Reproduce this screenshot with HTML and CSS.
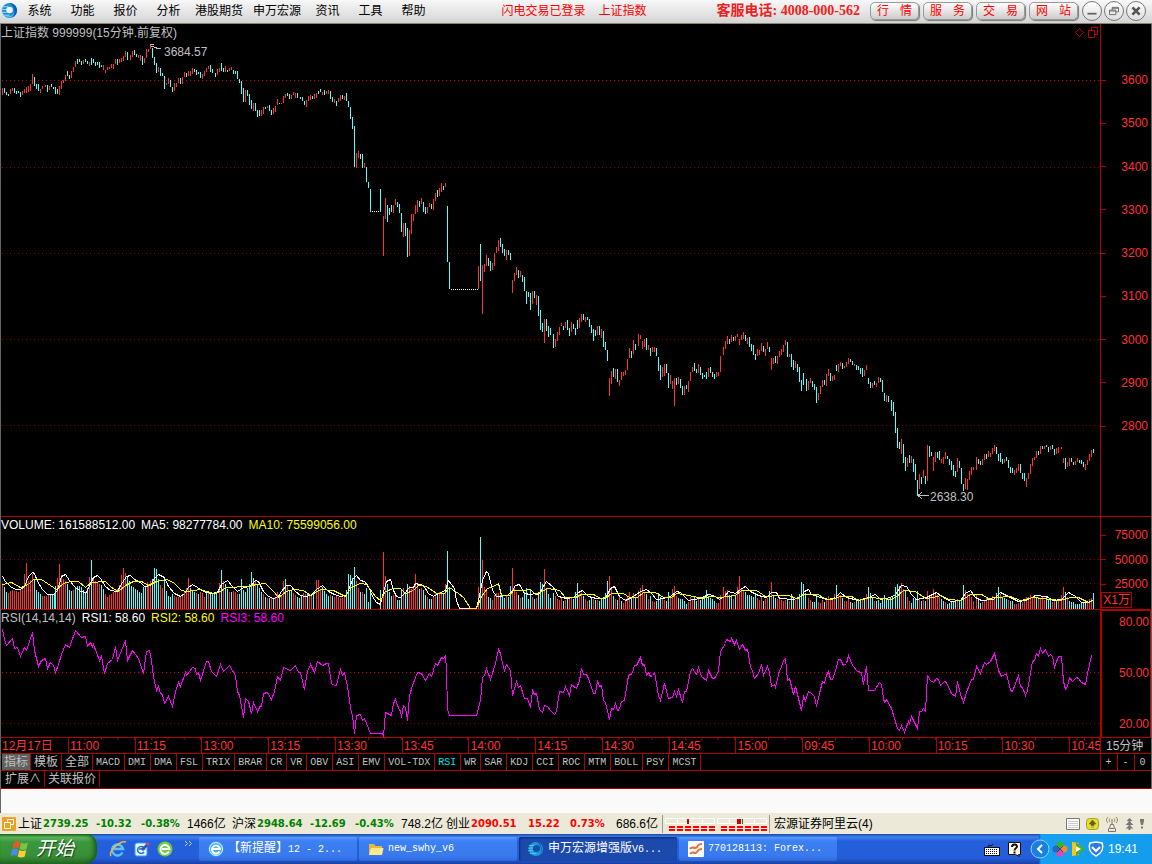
FILE: index.html
```html
<!DOCTYPE html>
<html lang="zh-CN">
<head>
    <meta charset="UTF-8">
    <meta name="viewport" content="width=device-width, initial-scale=1.0">
    <title>申万宏源增强版V6</title>
    <link rel="stylesheet" href="styles.css">
</head>
<body>
    <!-- Menu bar -->
    <header class="menu-bar">
        <svg class="app-logo" viewBox="0 0 18 18" aria-hidden="true">
            <circle cx="9" cy="9" r="8" fill="#1d8ede"/>
            <path d="M1 5h7M0 8h6M0 11h6M2 14h7" stroke="#a8dcf8" stroke-width="1"/>
            <path d="M9 1a8 8 0 0 1 3 15.400c4-4 3-12-3-15.400z" fill="#0a5cb0"/>
            <circle cx="9" cy="8.500" r="3.500" fill="#e8f6ff"/>
            <path d="M4 14c4 2 8 1 10-3-1 5-6 7-10 3z" fill="#57c8f4"/>
        </svg>
        <nav class="menu">
            <a href="#">系统</a>
            <a href="#">功能</a>
            <a href="#">报价</a>
            <a href="#">分析</a>
            <a href="#">港股期货</a>
            <a href="#">申万宏源</a>
            <a href="#">资讯</a>
            <a href="#">工具</a>
            <a href="#">帮助</a>
        </nav>
        <div class="login-info"><span>闪电交易已登录</span><span>上证指数</span></div>
        <div class="hotline">客服电话: 4008-000-562</div>
        <div class="quick-buttons">
            <button type="button"><span>行</span><span>情</span></button>
            <button type="button"><span>服</span><span>务</span></button>
            <button type="button"><span>交</span><span>易</span></button>
            <button type="button"><span>网</span><span>站</span></button>
        </div>
        <div class="window-buttons">
            <button type="button" aria-label="最小化"><svg viewBox="0 0 20 20"><path d="M5 13h10" stroke="#666" stroke-width="2"/></svg></button>
            <button type="button" aria-label="还原"><svg viewBox="0 0 20 20"><path d="M8 9V6h7v5h-3M5 9h7v5H5zM5 10h7M8 7h7" fill="none" stroke="#666"/></svg></button>
            <button type="button" aria-label="关闭"><svg viewBox="0 0 20 20"><path d="M6 6l8 8M14 6l-8 8" stroke="#555" stroke-width="3"/></svg></button>
        </div>
    </header>

    <!-- Charts -->
    <main class="charts">
        <section class="panel panel-price">
            <div class="plot">
                <svg id="priceChart" viewBox="1 24 1099 492" preserveAspectRatio="none">
                    <path class="grid-main" d="M2 80.500H1101"/>
                    <path class="grid" d="M2 167.500H1101M2 253.500H1101M2 339.500H1101M2 425.500H1101"/>
                    <path class="arrow" d="M161 48.500h-3l-7-2.500M150 49v-5h4M929 495.500H918M922 492.500l-4 3 4 3"/>
                    <path class="marker" d="M1079.500 28.500l4 4-4 4-4-4zM1088.500 30.500h6v7h-6zM1091.500 30v-2.500h6v7h-3"/>
                </svg>
                <h1 class="plot-title">上证指数 999999(15分钟.前复权)</h1>
                <span class="note note-high">3684.57</span>
                <span class="note note-low">2638.30</span>
            </div>
            <ul class="scale">
                <li>3600</li><li>3500</li><li>3400</li><li>3300</li><li>3200</li><li>3100</li><li>3000</li><li>2900</li><li>2800</li>
            </ul>
        </section>

        <section class="panel panel-volume">
            <div class="plot">
                <svg id="volumeChart" viewBox="1 517 1099 92" preserveAspectRatio="none">
                    <path class="grid" d="M2 559.500H1101M2 583.500H1101"/>
                </svg>
                <p class="plot-title"><span class="white">VOLUME: 161588512.00</span><span class="white">MA5: 98277784.00</span><span class="yellow">MA10: 75599056.00</span></p>
            </div>
            <ul class="scale">
                <li>75000</li><li>50000</li><li>25000</li>
            </ul>
            <span class="unit">X1万</span>
        </section>

        <section class="panel panel-rsi">
            <div class="plot">
                <svg id="rsiChart" viewBox="1 610 1099 127" preserveAspectRatio="none">
                    <path class="grid-main" d="M2 672.500H1101"/>
                    <path class="grid" d="M2 723.500H1101"/>
                </svg>
                <p class="plot-title"><span>RSI(14,14,14)</span><span class="white">RSI1: 58.60</span><span class="yellow">RSI2: 58.60</span><span class="magenta">RSI3: 58.60</span></p>
            </div>
            <ul class="scale">
                <li>80.00</li><li>50.00</li><li>20.00</li>
            </ul>
        </section>
    </main>

    <!-- Time axis -->
    <div class="time-axis">
        <div class="times">
            <span>12月17日</span><span>11:00</span><span>11:15</span><span>13:00</span><span>13:15</span><span>13:30</span><span>13:45</span><span>14:00</span><span>14:15</span><span>14:30</span><span>14:45</span><span>15:00</span><span>09:45</span><span>10:00</span><span>10:15</span><span>10:30</span><span>10:45</span>
        </div>
        <div class="period">15分钟</div>
    </div>

    <!-- Indicator tabs -->
    <div class="tabs">
        <button type="button" class="cn selected">指标</button>
        <button type="button" class="cn">模板</button>
        <button type="button" class="cn">全部</button>
        <button type="button">MACD</button>
        <button type="button">DMI</button>
        <button type="button">DMA</button>
        <button type="button">FSL</button>
        <button type="button">TRIX</button>
        <button type="button">BRAR</button>
        <button type="button">CR</button>
        <button type="button">VR</button>
        <button type="button">OBV</button>
        <button type="button">ASI</button>
        <button type="button">EMV</button>
        <button type="button">VOL-TDX</button>
        <button type="button" class="current">RSI</button>
        <button type="button">WR</button>
        <button type="button">SAR</button>
        <button type="button">KDJ</button>
        <button type="button">CCI</button>
        <button type="button">ROC</button>
        <button type="button">MTM</button>
        <button type="button">BOLL</button>
        <button type="button">PSY</button>
        <button type="button">MCST</button>
        <div class="zoom-buttons">
            <button type="button">+</button>
            <button type="button">-</button>
            <button type="button">0</button>
        </div>
    </div>
    <div class="tabs tabs-extra">
        <button type="button" class="cn">扩展∧</button>
        <button type="button" class="cn">关联报价</button>
    </div>
    <div class="message-area"></div>

    <!-- Status bar -->
    <footer class="status-bar">
        <svg class="status-logo" viewBox="0 0 14 14" aria-hidden="true">
            <rect width="14" height="14" rx="1" fill="#f0a020"/>
            <path d="M5.500 5V2.500h6v5H9M2.500 5.500h6v6h-6z" fill="none" stroke="#fff"/>
        </svg>
        <div class="quote down"><span>上证</span><b>2739.25</b><b>-10.32</b><b>-0.38%</b><span>1466亿</span></div>
        <div class="quote down"><span>沪深</span><b>2948.64</b><b>-12.69</b><b>-0.43%</b><span>748.2亿</span></div>
        <div class="quote up"><span>创业</span><b>2090.51</b><b>15.22</b><b>0.73%</b><span>686.6亿</span></div>
        <div class="meters">
            <svg viewBox="0 0 50 14" aria-hidden="true">
                <path d="M.5 1.500h49v5H.5zM12.500 1v6M37.500 1v6" fill="none" stroke="#fff"/>
                <path d="M23 2v5" stroke="#c00" stroke-width="2"/>
                <path d="M4 10h46M4 13h46" stroke="#f00" stroke-width="2" stroke-dasharray="6 2"/>
            </svg>
            <svg viewBox="0 0 50 14" aria-hidden="true">
                <path d="M.5 1.500h49v5H.5zM12.500 1v6M37.500 1v6" fill="none" stroke="#fff"/>
                <path d="M22 2v5" stroke="#c00" stroke-width="4"/><path d="M25.500 2v5" stroke="#080"/>
                <path d="M4 10h46M4 13h46" stroke="#f00" stroke-width="2" stroke-dasharray="6 2"/>
            </svg>
        </div>
        <span class="server">宏源证券阿里云(4)</span>
        <div class="status-icons">
            <svg width="14" height="14" viewBox="0 0 14 14"><path d="M.5 1.500h13v11H.5z" fill="#fff" stroke="#777"/><path d="M2 4.500h10M2 6.500h10M2 8.500h10M2 10.500h10" stroke="#ccc"/></svg>
            <svg width="13" height="14" viewBox="0 0 13 14"><rect x=".5" y="1.500" width="12" height="11" rx="3" fill="#e4dc38" stroke="#aaa020"/><path d="M6.500 3l3.500 4H8v1.500H5V7H3zM5 10h3" fill="#666000" stroke="#666000" stroke-width=".5"/></svg>
            <svg width="14" height="16" viewBox="0 0 14 16"><path d="M3 1C1 3 1 5 3 7M11 1c2 2 2 4 0 6M5 2.500C4 4 4 5 5 6M9 2.500c1 1.500 1 2.500 0 3.500" fill="none" stroke="#8a8850"/><path d="M7 3v5M5.500 8.500h3l1 4h1v3h-7v-3h1zM5 12.500h4" fill="none" stroke="#777"/></svg>
            <svg width="9" height="14" viewBox="0 0 9 14"><path d="M4.500 1l3 3h-2v1l3 3h-3v1l3 2.500h-3V13h-2v-1.500h-3L3.500 9V8h-3l3-3V4h-2z" fill="#777"/></svg>
            <svg width="4" height="12" viewBox="0 0 4 12"><path d="M0 1h4v2L3 7H1L0 3zM1 8.500h2v2H1z" fill="#777"/></svg>
        </div>
    </footer>

    <!-- Taskbar -->
    <div class="taskbar">
        <button type="button" class="start">
            <svg width="20" height="20" viewBox="0 0 20 20" aria-hidden="true">
                <path d="M4 3c2-1.500 4-1.500 6 0L8.500 9.500c-2-1.300-4-1.300-6 0z" fill="#f0552a"/>
                <path d="M11 3.500c2 1.300 4 1.300 7 0L16.500 10c-2.500 1.300-5 1.300-7 0z" fill="#7cc440"/>
                <path d="M2.200 10.500c2-1.300 4-1.300 6 0L6.700 17c-2-1.300-4-1.300-6 0z" fill="#4a8af0"/>
                <path d="M9.200 11c2 1.300 4.500 1.300 7 0l-1.500 6.500c-2.500 1.300-5 1.300-7 0z" fill="#ffcc33"/>
            </svg>
            <span>开始</span>
        </button>
        <div class="quick-launch">
            <svg width="18" height="18" viewBox="0 0 18 18"><path d="M13.500 12.500A5.500 5.500 0 1 1 14 9H5" fill="none" stroke="#5cc0ff" stroke-width="2.500"/><path d="M2 16C-1 12 11 0 17 2" fill="none" stroke="#f4b83a" stroke-width="1.500"/></svg>
            <svg width="16" height="16" viewBox="0 0 16 16"><rect x="1" y="2" width="12" height="13" rx="2" fill="#e8f4ff" stroke="#3aa0e8"/><path d="M10 11a3.500 3.500 0 1 1 .5-3H5" fill="none" stroke="#2272d0" stroke-width="1.500"/><path d="M7 8l6-6 2 2-6 6z" fill="#2858b0"/><path d="M13 2l2 2" stroke="#f44" stroke-width="2"/></svg>
            <svg width="16" height="16" viewBox="0 0 16 16"><circle cx="8" cy="8" r="7.500" fill="#6fce3c"/><path d="M12 10.500A4.500 4.500 0 1 1 12.500 8H5" fill="none" stroke="#fff" stroke-width="2"/></svg>
            <svg class="more" width="9" height="7" viewBox="0 0 9 7"><path d="M1 1l2.500 2.500L1 6M5 1l2.500 2.500L5 6" fill="none" stroke="#b8d4ff"/></svg>
        </div>
        <div class="tasks">
            <button type="button">
                <svg width="16" height="16" viewBox="0 0 16 16"><circle cx="8" cy="8" r="7.500" fill="#4ab2ee"/><circle cx="8" cy="8" r="6.500" fill="none" stroke="#d8f2ff"/><path d="M11.500 10.500A4 4 0 1 1 12 8H5" fill="none" stroke="#fff" stroke-width="2"/></svg>
                <span><span class="cn">【新提醒】</span>12 - 2...</span>
            </button>
            <button type="button">
                <svg width="16" height="16" viewBox="0 0 16 16"><path d="M1 3h5l1.500 2H14v9H1z" fill="#e8b83c"/><path d="M3 7h12.500L14 14H1z" fill="#ffe98c"/></svg>
                <span>new_swhy_v6</span>
            </button>
            <button type="button" class="active">
                <svg width="16" height="16" viewBox="0 0 18 18"><circle cx="9" cy="9" r="8" fill="#1d9ee0"/><path d="M1 5h7M0 8h6M0 11h6M2 14h7" stroke="#5ad0e8"/><circle cx="9.500" cy="8.500" r="4" fill="#1b49ac"/><path d="M9 1a8 8 0 0 1 4 14c3-5 2-10-4-14z" fill="#0c62c0"/></svg>
                <span><span class="cn">申万宏源增强版</span>V6...</span>
            </button>
            <button type="button">
                <svg width="16" height="16" viewBox="0 0 16 16"><rect width="16" height="16" rx="1" fill="#fff"/><path d="M2 8c3-4 5 1 7-2s3-3 5-3M2 13c3-4 5 1 7-2s3-3 5-3" fill="none" stroke="#ee6a30" stroke-width="2"/></svg>
                <span>770128113: Forex...</span>
            </button>
        </div>
        <div class="language">
            <svg width="16" height="14" viewBox="0 0 16 14"><path d="M4 5l1-2 2 1 2-2" fill="none" stroke="#111"/><rect x=".5" y="5.500" width="15" height="8" fill="#fff" stroke="#111"/><path d="M2 7.500h12M2 9.500h12M2 11.500h12" stroke="#111" stroke-dasharray="1 1"/></svg>
            <svg width="14" height="15" viewBox="0 0 14 15"><path d="M.5.500h12v12h-2l1 2-4-2h-7z" fill="#fff8e0" stroke="#111"/><path d="M4 5c0-3.500 5-3 5-.5 0 2-2.500 1.500-2.500 4M6.500 9.500v2" fill="none" stroke="#111" stroke-width="2"/></svg>
        </div>
        <div class="tray">
            <svg class="tray-arrow" width="20" height="20" viewBox="0 0 20 20"><circle cx="10" cy="10" r="9" fill="#1a80e0" stroke="#8fd0ff"/><path d="M12 6l-4 4 4 4" fill="none" stroke="#fff" stroke-width="2"/></svg>
            <svg width="16" height="16" viewBox="0 0 16 16"><circle cx="8" cy="4" r="3.500" fill="#38b818"/><circle cx="12" cy="8" r="3.500" fill="#f08c28"/><circle cx="8" cy="12" r="3.500" fill="#ee44aa"/><circle cx="4" cy="8" r="3.500" fill="#2a66c8"/><path d="M5 5l6 6M11 5l-6 6" stroke="#145a80"/></svg>
            <svg width="16" height="16" viewBox="0 0 16 16"><path d="M2 1l7 1v12l-7 1z" fill="#ffc21a"/><path d="M6 1l9 7-9 7z" fill="#48b030"/><path d="M6 5l5 3-5 3z" fill="#fff"/></svg>
            <svg width="16" height="16" viewBox="0 0 16 16"><path d="M8 1l6 1c2 6-1 11-6 13C3 13 0 8 2 2z" fill="#2a78e8" stroke="#fff" stroke-width="1.500"/><path d="M4 6l4 4 4-4" fill="none" stroke="#fff" stroke-width="2"/></svg>
            <time>19:41</time>
        </div>
    </div>

    <script src="chart.js"></script>
</body>
</html>
```
FILE: styles.css
```css
* {
    box-sizing: border-box;
    margin: 0;
    padding: 0;
}
body {
    display: flex;
    flex-direction: column;
    min-height: 100vh;
    background: #000;
    color: #c0c0c0;
    font-family: "Liberation Sans", "Noto Sans CJK SC", sans-serif;
    font-size: 12px;
    line-height: 14px;
    overflow-x: hidden;
}
button {
    border: 0;
    background: none;
    font: inherit;
    color: inherit;
    white-space: nowrap;
}
svg {
    display: block;
    flex-shrink: 0;
}
ul {
    list-style: none;
}

/* Menu bar */
.menu-bar {
    display: flex;
    align-items: center;
    height: 24px;
    padding: 0 6px 2px 1px;
    background: linear-gradient(#f8f8f8, #d4d4d4);
    border-bottom: 1px solid #8c8474;
    color: #000;
    white-space: nowrap;
}
.app-logo {
    width: 17px;
    height: 17px;
}
.menu {
    display: flex;
}
.menu a {
    min-width: 43px;
    padding: 0 5px;
    color: #000;
    text-align: center;
    text-decoration: none;
}
.login-info {
    display: flex;
    gap: 13px;
    margin-left: auto;
    color: #f00;
}
.hotline {
    margin-left: 70px;
    color: #f02020;
    font-family: "Liberation Serif", "Noto Sans CJK SC", serif;
    font-size: 14px;
    font-weight: bold;
}
.quick-buttons {
    display: flex;
    gap: 4px;
    margin-left: 10px;
}
.quick-buttons button {
    display: flex;
    align-items: center;
    justify-content: space-between;
    width: 49px;
    height: 18px;
    padding: 0 6px;
    border: 1px solid #999;
    border-radius: 5px;
    background: linear-gradient(#fff, #ccc);
    box-shadow: 1px 1px 1px #777;
    color: #f00;
}
.window-buttons {
    display: flex;
    gap: 2px;
    margin-left: 4px;
}
.window-buttons button {
    width: 20px;
    height: 20px;
    border: 1px solid #777;
    border-radius: 50%;
    background: linear-gradient(#fff, #ddd);
}

/* Charts */
.charts {
    display: flex;
    flex: 1;
    flex-direction: column;
    border-left: 1px solid #666;
    border-right: 1px solid #666;
}
.panel {
    position: relative;
    display: grid;
    grid-template-columns: minmax(0, 1fr) 51px;
    border-bottom: 1px solid #b00000;
}
.panel-price {
    flex: 492 1 0;
}
.panel-volume {
    flex: 92 1 0;
}
.panel-rsi {
    flex: 127 1 0;
}
.plot {
    position: relative;
    min-height: 0;
}
.plot svg {
    position: absolute;
    width: 100%;
    height: 100%;
    shape-rendering: crispEdges;
}
.plot-title {
    position: relative;
    display: flex;
    gap: 6px;
    padding-top: 1px;
    font-size: 12px;
    font-weight: normal;
    white-space: nowrap;
}
.note {
    position: absolute;
}
.note-high {
    left: 163px;
    top: 21px;
}
.note-low {
    left: 929px;
    bottom: 12px;
}
.white {
    color: #fff;
}
.yellow {
    color: #ff0;
}
.magenta {
    color: #f0f;
}
.panel-price .plot-title {
    padding-top: 2px;
}
.scale {
    display: flex;
    flex-direction: column;
    justify-content: space-between;
    padding-right: 3px;
    border-left: 1px solid #b00000;
    color: #ff3232;
}
.scale li {
    display: flex;
    align-items: center;
    justify-content: space-between;
}
.scale li::before {
    width: 5px;
    height: 1px;
    background: #b00000;
    content: "";
}
.panel-price .scale {
    padding-top: 49px;
    padding-bottom: 83px;
}
.panel-volume .scale {
    padding-top: 11px;
    padding-bottom: 18px;
}
.panel-rsi .scale {
    padding: 4px 1px 6px 0;
    border: 1px solid #b00000;
    border-left-width: 2px;
    border-bottom: 0;
}
.panel-rsi .scale li::before {
    width: 0;
}
.unit {
    position: absolute;
    right: 19px;
    bottom: 1px;
    padding: 0 1px;
    border: 1px solid #b00000;
    color: #ff3232;
}

/* Lines inside the charts */
.grid,
.grid-main {
    fill: none;
    stroke: #900000;
    stroke-dasharray: 1 3;
}
.grid-main {
    stroke: #c80000;
}
.rise,
.fall,
.flat,
.line,
.arrow,
.marker {
    fill: none;
    stroke: #ff3232;
}
.fall {
    stroke: #54ffff;
}
.flat {
    stroke: #fff;
    stroke-dasharray: 1 1;
}
.arrow {
    stroke: #c0c0c0;
}
.marker {
    stroke: #b00000;
}
.line-ma5 {
    stroke: #fff;
}
.line-ma10 {
    stroke: #ff0;
}
.line-rsi {
    stroke: #f0f;
}

/* Time axis */
.time-axis {
    display: grid;
    grid-template-columns: minmax(0, 1fr) 51px;
    height: 16px;
    border: 1px solid #666;
    border-width: 0 1px;
    box-shadow: inset 0 -1px #b00000;
    line-height: 16px;
}
.times {
    display: grid;
    grid-template-columns: 67px repeat(15, minmax(0, 13fr)) minmax(0, 6fr);
    color: #ff3232;
}
.times span {
    overflow: hidden;
    padding-left: 1px;
    border-left: 1px solid #b00000;
    background: linear-gradient(90deg, #b00000 1px, transparent 1px) -1px 0 / 25% 2px repeat-x;
    white-space: nowrap;
}
.times span:first-child {
    border-left: 0;
    background: none;
}
.period {
    padding-left: 5px;
    border-left: 1px solid #b00000;
}

/* Indicator tabs */
.tabs {
    display: flex;
    height: 17px;
    padding-left: 1px;
    border: 1px solid #666;
    border-width: 0 1px;
    box-shadow: inset 0 -1px #b00000;
}
.tabs button {
    height: 16px;
    padding: 0 4px 0 3px;
    border-right: 1px solid #b00000;
    font-family: "Liberation Mono", monospace;
    font-size: 10px;
    line-height: 17px;
}
.tabs .cn {
    padding: 0 3px;
    font-family: "Liberation Sans", "Noto Sans CJK SC", sans-serif;
    font-size: 12px;
    line-height: 16px;
}
.tabs .selected {
    padding: 0 2px;
    background: #606060;
}
.tabs .current {
    color: #00e0e0;
}
.zoom-buttons {
    display: flex;
    width: 51px;
    margin-left: auto;
    border-left: 1px solid #b00000;
}
.zoom-buttons button {
    flex: 1;
}
.zoom-buttons button:last-child {
    border-right: 0;
}
.tabs-extra {
    height: 18px;
}
.message-area {
    height: 24px;
    background: #fafafa;
    border-left: 1px solid #666;
}

/* Status bar */
.status-bar {
    display: flex;
    align-items: center;
    height: 21px;
    padding: 0 8px 0 2px;
    background: #ece9d8;
    color: #000;
    white-space: nowrap;
}
.status-logo {
    width: 14px;
    height: 14px;
    margin-right: 2px;
}
.quote {
    display: grid;
    grid-template-columns: 25px 53px 45px 46px 45px;
    align-items: center;
}
.quote b {
    font-family: "DejaVu Sans", sans-serif;
    font-size: 10px;
}
.down b {
    color: #008000;
}
.up b {
    color: #f00;
}
.up {
    grid-template-columns: 25px 57px 42px 46px 46px;
}
.meters {
    display: flex;
    gap: 2px;
    padding: 2px;
    border: 1px solid #999;
    border-width: 0 1px;
}
.meters svg {
    width: 50px;
    height: 14px;
}
.server {
    padding-left: 4px;
}
.status-icons {
    display: flex;
    gap: 6px;
    align-items: center;
    margin-left: auto;
}

/* Taskbar */
.taskbar {
    display: flex;
    align-items: stretch;
    height: 30px;
    background: linear-gradient(#1c48a8, #3c82f0 3px, #2560dc 7px, #245edb 24px, #1941a5);
    color: #fff;
    white-space: nowrap;
}
.start {
    display: flex;
    align-items: center;
    gap: 6px;
    width: 97px;
    padding-left: 10px;
    border-radius: 0 10px 12px 0;
    background: linear-gradient(#226c22, #5cb85c 3px, #3c983c 8px, #388e38 22px, #256c25);
    box-shadow: inset -3px 0 4px #1c5c1c;
    font-size: 19px;
    font-style: italic;
    text-shadow: 1px 1px 1px #143c14;
}
.quick-launch {
    display: flex;
    gap: 7px;
    align-items: center;
    padding-left: 12px;
}
.quick-launch .more {
    align-self: flex-start;
    margin: 6px 0 0 4px;
}
.tasks {
    display: flex;
    flex: 1;
    gap: 2px;
    padding: 3px 0 3px 6px;
    min-width: 0;
}
.tasks button {
    display: flex;
    align-items: center;
    gap: 4px;
    flex: 0 1 158px;
    min-width: 0;
    overflow: hidden;
    padding-left: 9px;
    border-radius: 2px;
    background: linear-gradient(#5c9cff, #3c80f4 4px, #3878ec 20px, #2c66d8);
    font-family: "Liberation Mono", "Noto Sans CJK SC", monospace;
    font-size: 10px;
}
.tasks .cn {
    font-size: 12px;
}
.tasks .active {
    background: #1b49ac;
    box-shadow: inset 1px 1px 2px #0c2c74;
}
.language {
    display: flex;
    gap: 8px;
    align-items: center;
    padding-right: 8px;
}
.tray {
    display: flex;
    gap: 2px;
    align-items: center;
    width: 122px;
    padding-right: 14px;
    background: linear-gradient(90deg, transparent 9px, #095bc9 9px, #18a0f0 11px, #139cec);
}
.tray time {
    margin-left: auto;
}
```
FILE: chart.js
```javascript
// Sticks: colour (r rise, c fall), top-bottom. "@n" sets the next x, the step is 6.
// Units are thirds of a chart pixel, counted from the origin of the block.
const prices = [
    [0, 30, `@7 r174-195 c174-189 c185-195 c192-198 r177-192 r174-183 c174-189 c183-192 c183-189 c186-201 r183-195 r177-189 r171-189
    r168-186 r162-183 r132-162 c141-168 c162-177 c162-183 r177-189 r168-177 @136 r165-171 c165-186 r168-180 c162-171 c171-177
    c171-192 c177-192 r168-195 r153-177 r150-159 r135-153 c123-138 c135-147 r123-144 r111-126 r93-111 c87-102 c87-96 c93-105
    r90-102 c87-96 c93-102 r96-108 c84-105 c87-100 c96-108 c96-105 c96-114 c105-112 r105-120 r120-129 r111-120 r111-117
    r102-114 r102-117 r87-102 c87-105 r87-99 r84-97 r78-93 r63-81 c66-90 @391 r75-90 r63-81 c60-75 c72-81 r75-84 r75-93
    c78-105 r84-99 r57-84 r57-66 r45-57 c54-84 c81-105 c99-129 r111-126 c114-138 c129-138 c138-177 r159-165 r144-162
    c150-171 c171-186 r159-183 r159-171 r144-159 c144-162 r141-162 r126-141 c129-141 r123-138 r123-138 r114-132 c117-126
    c120-135 c126-132 c126-144 r132-147 r123-138 r114-126 r108-117 c105-126 c117-129 @646 c129-141 r117-135 r114-126
    c99-123 c114-126 r108-126 c120-126 r114-123 r111-120 c120-132 c123-132 c123-147 c147-159 c153-192 c174-216 r180-216
    c180-198 c192-225 c210-237 r219-243 c219-243 c240-261 c240-258 r240-258 r231-252 c231-237 r228-234 c225-243 c240-255
    r234-252 r228-246 r207-225 c219-222 r219-222 r198-219 r192-204 c189-198 c192-207 r195-207 r186-195 r189-204 c189-204
    @901 c201-207 c201-213 c213-225 r210-231 r198-213 r195-210 c198-207 r192-207 r189-204 c183-192 c177-186 r186-195
    c180-195 r183-192 r180-192`],
    [330, 80, `@1 c33-57 c51-66 r57-69 c63-78 r54-66 r45-63 c45-57 r48-60 c39-63 c63-81 c81-117 c111-147 c138-261 r219-264
    r213-234 c222-237 c222-264 r249-264 c261-306 c306-324 c327-396 @151 c327-396 @160 r408-528 r354-417 c375-426 c384-405
    c375-396 r375-399 r357-375 c366-381 c372-399 c399-456 r429-471 c429-468 c444-531 r450-528 r402-462 r402-423 r375-402
    r360-396 c363-381 r354-372 c366-396 c381-402 r381-399 r369-381 c372-387 r357-390 r339-363 c330-351 r324-348 r309-336
    c318-330 r309-321 c378-546 c546-627 @445 r558-627 c492-603 r555-702 r552-576 r525-558 c534-558 c543-573 r549-570
    r519-558 r501-519 r480-513 c474-501 c492-519 c507-528 r510-540 c510-525 c519-540 r600-639 r579-603 r561-585 c570-594
    r573-591 c585-606 c591-633 c633-672 c636-651 c639-690 r633-672 c633-654 r645-675 c648-708 c690-750 c729-756 r717-789
    c717-753 c738-771 c744-765 @670 c762-804 r777-801 r756-783 r741-765 r729-738 c738-750 r726-744 c720-750 c744-768
    r726-756 c732-747 c744-765 c720-747 r714-744 r702-726 c702-720 r711-726 c711-720 c717-741 c735-759 c747-783 c750-768
    r738-765 c738-765 r747-774 c753-801 c786-810 c810-843`],
    [600, 310, `@28 r204-258 r183-222 c174-201 r177-207 c177-216 r210-228 r186-210 r186-198 r180-195 r147-180 r114-144 c123-144
    r90-132 c102-120 @115 r72-108 r75-87 r93-117 r87-111 c84-120 r105-120 c114-138 r111-126 r111-126 c114-138 c141-183
    c165-210 r171-201 r162-198 c162-189 c189-234 r195-222 r213-237 r204-288 c204-225 r201-222 c207-234 c228-255 r228-255
    c225-237 r213-246 r186-213 r171-186 c159-183 c177-189 r162-189 c171-195 c189-207 c195-201 c186-207 r174-201 c171-189
    c186-201 c192-207 r186-201 r186-198 r138-186 @370 r111-135 r93-117 r78-102 c87-102 r75-96 c81-93 r78-93 r72-81 r87-105
    r75-90 r66-87 c75-93 r84-102 c81-111 c102-123 c105-135 c132-150 r117-138 r120-135 r99-123 c108-126 r117-138 r96-117
    c111-126 r144-180 r144-162 c138-159 r138-162 r123-141 r117-135 r105-126 r90-105 c96-141 r132-141 c132-171 c150-180
    r153-174 c162-186 c171-216 c210-243 c189-225 @619 c207-243 r213-240 r204-219 c213-231 c222-240 c231-279 r249-270
    r228-252 r210-231 c210-225 r192-228 r177-198 c189-213 r198-213 r195-210 c165-183 r162-186 r156-168 c159-177 r168-174
    r156-171 r144-162 c147-156 c153-165 r162-168 c165-180 c168-180 c174-192 c174-201 r180-198 r165-180 c204-222 c216-234
    r219-234 c213-225 r219-231 r201-219 c204-216 c210-246 c249-273 r255-276 c258-276 @874 c270-303 c276-318 c306-369
    c354-414 c396-417`],
    [860, 370, `@124 r207-252 c222-279 c261-303 r264-291 c255-279 r258-279 c267-306 c282-330 c330-378 r312-357 c321-342 r300-324
    c318-342 r225-333 c228-261 c246-258 r261-303 r246-276 c246-264 c243-270 r267-279 r261-282 r246-267 c258-267 c267-285
    c273-300 c285-318 c303-321 r264-306 c273-294 c294-342 c342-363 r324-357 r327-360 r303-330 r291-315 r291-300 @349
    r261-300 c267-282 c273-285 r267-285 r252-270 c252-267 r243-261 r249-261 r234-252 r225-243 c231-252 c252-273 c249-276
    c267-282 r267-279 c261-273 c270-294 c291-309 c294-309 r300-315 r294-309 r282-303 c282-309 c309-327 c309-333 r324-351
    r309-327 r282-312 r264-288 r261-270 r243-264 c243-255 r228-252 c228-237 r228-237 c225-231 c231-246 r228-240 c225-237
    c237-255 r234-252 r231-249 @604 r231-237 r264-279 c264-297 r276-291 r264-288 c264-276 c276-285 r273-285 r264-276
    c270-279 c270-282 c276-291 r282-300 r270-285 r252-273 r240-261 c237-249`]
];

// Volume sticks only have a top, they all stand on the panel's base line
const volumes = [
    [0, 510, `@7 r225 c231 c246 r249 r243 r240 r243 r243 r246 r237 r231 r192 r159 r213 r210 r192 c207 c240 c246 c252 r258 r258
    r258 r255 c252 c252 c249 @166 c228 r204 r162 r195 r207 r213 c222 c240 c243 r240 c234 c228 c228 c231 c240 c246 c234
    r201 c150 r207 r213 r216 r222 c225 c237 r252 r261 r255 r252 r246 r237 r237 r225 r195 r174 r189 c198 c213 c228 c231
    c237 c240 c246 c249 c231 c228 r216 @445 r222 r213 c207 c174 c178 c207 r225 r234 c204 c243 c258 c261 c252 r258 r261
    r261 r258 r255 r243 r234 r204 c234 c243 c246 r249 c252 r246 r249 r261 c249 r249 c252 c252 c249 c249 @658 r219 c180
    r213 c222 c237 r246 c246 r243 r246 r252 c252 c207 c240 c246 c234 c222 c186 c204 r213 c222 c234 c246 r252 c261 r264
    c264 r261 c264 r264 r246 c255 r255 r213 c207 r228 c243 c243 r249 r255 c261 c264 c258 r249 r252 c252 r258 r252 c249
    @949 r210 r210 r240 c231 c243 c252 c258 r255 c258 r261 r258 r261 r264 r264 r255 c240 c192 c195 c204 c171 r213 r234
    c246 r246 c252 c234 c275 c240 @1141 c240 @1150 r126 r198 c222 c246 c258 r255 r258 c270 c270`],
    [400, 510, `@4 c237 r234 c249 c222 r228 r237 r234 r192 r225 c237 r234 c240 c255 r261 c267 c267 r258 r246 c252 r246 r246 c252
    r222 c123 c234 @235 r231 c81 r150 r231 r237 c261 c264 r270 r255 r249 r249 c255 c255 c264 r258 c261 c228 r174 r228
    r246 c255 r264 c261 c246 c234 c267 c237 r261 c267 r264 c249 c216 c222 r177 c234 c252 c264 @460 c249 r258 r267 r270
    r264 c273 r270 c267 r264 r261 c267 c246 c219 r252 r249 c258 r267 r273 c270 c264 r267 c270 r270 c273 c267 c267 c249
    c213 r198 r231 c258 r267 c270 r261 c273 r279 r267 r261 r246 c261 r249 c264 @715 r243 r234 r225 r246 c252 r267 c258
    r273 r276 c273 c249 c261 r267 r270 c273 c246 r258 r237 r228 r258 c264 c267 c267 c273 c282 r276 r261 r267 c261 c273
    r261 c270 c267 c258 c240 c258 c264 c267 c273 r279 r279 r255 @970 r231 r243 r240 c255 c255 r267 c255 r231 r198 r237
    r243 c246 c255 c255 c258 c261 c255 r264 r270 r261 c273 r267 r264 c243 r216 c258 c264 r267 r267 r270 r273 r270 c267
    r273 c252 c264 r270 r264 c252`],
    [780, 510, `@64 c216 c222 c249 @85 r264 r270 c276 c276 c252 r276 r279 r270 c276 r267 r258 r267 r264 r252 c225 r252 r255 c264
    r273 r273 r267 c276 c279 r276 c273 c267 c267 r270 c267 r252 c231 c249 c264 r273 c273 c270 c279 c270 c255 c267 c267
    c264 c258 @346 c231 c222 c228 r219 r237 c240 r261 r273 c279 c264 c267 c243 r264 c273 r270 c273 r243 c264 r258 r237
    r249 r255 r261 c267 c273 r276 c282 c279 c276 c273 c270 r267 c273 c264 c225 r240 r252 r252 r261 r273 @589 r255 c270
    c279 r276 r270 r261 r264 r264 r258 r261 c249 c231 r252 c261 c264 c267 r270 c273 c273 r282 r282 r279 c276 r276 r270
    r261 r261 r255 r261 r258 c264 r261 r264 r261 r270 c261 c270 c270 r276 r273 c273 r270 @844 r255 r231 c246 r261 c273
    c276 c276 c282 c282 c282 c279 c276 c276 r273 r267 r264 c249`]
];

const ma5 = [
    [0, 510, `7,198 16,213 30,228 45,237 62,239 72,228 85,200 97,187 103,190 112,215 127,238 142,252 160,252 172,240 184,200
    196,192 208,210 222,230 240,243 258,246 268,225 280,202 292,196 300,205 315,230 330,240 352,244 362,225 378,198 392,195
    402,208 420,218 433,228 450,226 462,205 476,193 492,203 505,228 522,250 540,258 553,250 565,232 577,223 592,232 610,245
    630,250 652,248 664,222 682,210 698,230 712,244 730,232 750,228 765,212 775,215 790,243 805,258 820,264 835,258 845,243
    858,225 872,226 885,245 900,255 915,258 935,255 950,237 966,226 985,243 1003,252 1020,258 1038,257 1046,240 1057,207
    1069,195 1080,210 1092,213 1105,228 1118,258 1130,278 1140,284 1148,255 1160,215 1170,207 1180,240 1190,260 1198,262`],
    [400, 510, `0,262 12,250 28,232 40,232 46,220 58,222 70,225 85,250 100,260 115,250 135,240 145,210 162,235 170,270 178,295
    228,295 236,270 247,210 260,184 266,190 277,240 290,258 322,257 337,240 345,227 358,223 372,250 390,252 405,250 415,252
    430,230 440,215 460,232 475,258 500,264 520,262 535,248 548,240 565,258 590,266 615,264 630,235 643,230 658,258 675,272
    700,258 722,243 740,238 755,250 770,268 790,264 812,260 828,243 842,248 865,270 900,264 925,253 940,256 957,268 972,258
    985,243 1005,250 1020,237 1035,228 1050,243 1075,256 1100,262 1115,246 1130,246 1138,264`],
    [780, 510, `0,264 40,268 60,262 72,243 84,237 95,252 120,262 145,269 165,262 182,246 200,262 235,272 265,262 285,253 300,268
    330,262 345,252 365,226 378,228 395,252 410,268 440,262 468,246 490,262 510,274 540,272 555,250 572,241 585,262 605,270
    640,268 660,246 690,262 715,274 740,270 765,255 800,258 820,271 845,268 865,248 885,258 905,276 925,277 940,268`]
];

const ma10 = [
    [0, 510, `7,222 35,216 62,233 85,222 100,208 125,208 150,226 170,238 190,220 210,213 235,214 255,232 275,218 315,213 335,232
    355,244 375,225 400,213 425,213 445,225 470,215 500,207 520,216 545,240 560,244 600,237 640,250 655,248 680,231 745,228
    770,222 795,220 820,243 835,261 860,245 880,238 910,241 930,255 960,238 1000,240 1035,260 1055,232 1080,220 1100,222
    1125,258 1140,270 1155,243 1180,234 1198,236`],
    [400, 510, `0,234 15,250 40,240 55,226 80,229 110,250 132,250 147,232 175,250 190,262 210,295 230,295 245,258 262,236 280,229
    294,219 305,255 327,256 340,240 370,240 390,237 405,254 425,243 445,235 478,240 495,262 525,262 545,252 580,253 600,265
    620,262 635,250 670,250 688,262 712,262 730,247 765,248 790,262 815,262 830,250 865,257 910,265 930,258 960,262 1005,256
    1025,240 1070,240 1095,260 1138,256`],
    [780, 510, `0,256 25,257 50,264 75,252 115,252 135,268 155,268 180,258 215,258 235,270 275,262 330,268 345,262 370,240 405,244
    435,264 460,262 480,256 505,268 545,270 570,253 605,254 625,265 650,262 690,258 720,271 760,262 840,270 870,262 895,262
    925,276 940,270`]
];

const rsi = [
    [0, 510, `7,358 12,388 20,405 36,385 42,415 52,412 62,440 73,412 80,422 97,367 104,420 116,470 124,450 136,445 143,474
    150,458 160,465 167,486 176,464 184,432 197,402 208,412 227,360 245,382 256,378 263,408 270,396 276,408 281,402 299,450
    304,440 312,490 322,460 338,448 347,410 352,450 376,390 383,452 397,421 415,445 430,490 440,425 448,420 455,450 460,500
    468,542 475,530 480,550 488,552 494,580 506,560 517,590 525,545 536,518 540,530 556,488 560,495 578,472 585,475 590,492
    596,487 601,511 618,453 626,453 635,484 648,500 662,463 670,485 688,466 706,495 712,545 718,555 730,622 737,566 745,574
    755,610 760,578 772,605 780,585 784,588 790,550 802,546 815,568 823,545 832,500 842,510 850,472 870,482 886,466 895,486
    902,488 914,538 922,485 932,464 944,486 952,454 966,466 978,460 986,460 995,520 1003,527 1009,527 1021,478 1028,495
    1034,486 1042,530 1052,592 1058,615 1063,670 1070,615 1081,614 1088,630 1092,626 1112,670 1147,671 1151,676 1156,608
    1175,616 1180,580 1187,568 1198,600`],
    [400, 510, `0,600 4,622 10,587 16,592 22,630 28,555 36,525 52,486 64,490 76,512 88,490 94,500 105,460 113,466 125,443 131,445
    136,436 138,480 142,598 148,616 229,616 241,570 247,502 254,495 260,476 272,508 285,460 290,445 295,419 302,430 306,460
    313,481 320,463 330,480 338,555 349,515 356,532 362,526 374,566 383,566 391,592 397,540 404,553 410,550 418,597 427,607
    433,586 442,588 452,602 462,614 468,605 478,545 490,547 496,530 508,556 515,523 530,535 537,510 545,476 551,492 558,492
    565,505 580,550 586,550 592,512 598,528 604,525 611,572 616,578 628,628 634,595 640,598 646,580 653,602 658,598 665,574
    673,570 686,495 697,490 702,466 708,466 721,443 728,466 733,463 739,495 745,488 752,500 758,497 764,488 776,555 782,572
    793,520 805,566 817,562 824,545 829,560 836,538 848,578 853,545 860,545 872,485 877,476 888,494 896,473 904,500 920,512
    926,481 937,505 944,505 956,485 962,425 975,400 980,388 990,395 994,386 1002,403 1010,390 1018,418 1028,402 1036,420
    1042,418 1050,470 1057,485 1064,505 1075,490 1084,463 1090,495 1102,468 1108,486 1115,530 1122,524 1126,532 1138,482`],
    [780, 510, `0,478 10,452 16,446 22,512 28,504 40,552 46,530 64,600 71,560 77,572 85,545 95,550 102,560 110,590 118,550 127,513
    133,520 139,495 145,485 152,508 158,508 165,480 175,448 182,447 189,466 198,460 206,437 218,466 232,484 243,486 249,523
    259,470 266,540 284,540 298,516 304,524 310,565 314,576 320,568 335,595 352,655 358,662 364,647 374,668 384,633 389,640
    395,618 412,656 418,605 425,603 430,596 436,603 442,497 450,512 460,516 468,504 474,508 480,526 492,515 500,518 514,550
    525,558 533,514 540,553 550,577 560,548 574,508 580,508 590,468 600,490 614,457 620,464 630,455 642,430 650,455 656,480
    665,500 678,490 690,540 698,543 715,496 722,530 727,532 735,556 742,540 757,455 764,450 770,430 776,440 782,415 787,430
    795,418 805,440 811,432 818,440 824,471 835,440 844,438 850,515 857,538 862,530 869,502 878,513 888,502 896,504 905,517
    915,522 923,490 934,436 938,440`]
];

function addPath(svg, className, d) {
    const path = document.createElementNS('http://www.w3.org/2000/svg', 'path');
    path.setAttribute('class', className);
    path.setAttribute('d', d);
    svg.appendChild(path);
}

function drawSticks(svg, blocks, base) {
    const d = { r: '', c: '' };
    blocks.forEach(([left, top, text]) => {
        let x = 0;
        text.split(/\s+/).forEach(token => {
            if (token[0] === '@') {
                x = Number(token.slice(1));
                return;
            }
            const [from, to] = token.slice(1).split('-').map(Number);
            const px = left + Math.floor(x / 3) + 0.5;
            d[token[0]] += `M${px} ${top + Math.round(from / 3)}V${to ? top + Math.round(to / 3) : base}`;
            x += 6;
        });
    });
    addPath(svg, 'rise', d.r);
    addPath(svg, 'fall', d.c);
}

function drawLine(svg, blocks, className) {
    const points = blocks.flatMap(([left, top, text]) => text.split(/\s+/).map(pair => {
        const [x, y] = pair.split(',').map(Number);
        return (left + Math.floor(x / 3) + 0.5) + ' ' + (top + Math.floor(y / 3) + 0.5);
    }));
    addPath(svg, 'line ' + className, 'M' + points.join('L'));
}

const priceChart = document.getElementById('priceChart');
const volumeChart = document.getElementById('volumeChart');
const rsiChart = document.getElementById('rsiChart');

drawSticks(priceChart, prices);
// Trading halts
addPath(priceChart, 'flat', 'M372 211.5H380M451 289.5H478');

drawSticks(volumeChart, volumes, 609);
drawLine(volumeChart, ma5, 'line-ma5');
drawLine(volumeChart, ma10, 'line-ma10');
drawLine(rsiChart, rsi, 'line-rsi');
```
